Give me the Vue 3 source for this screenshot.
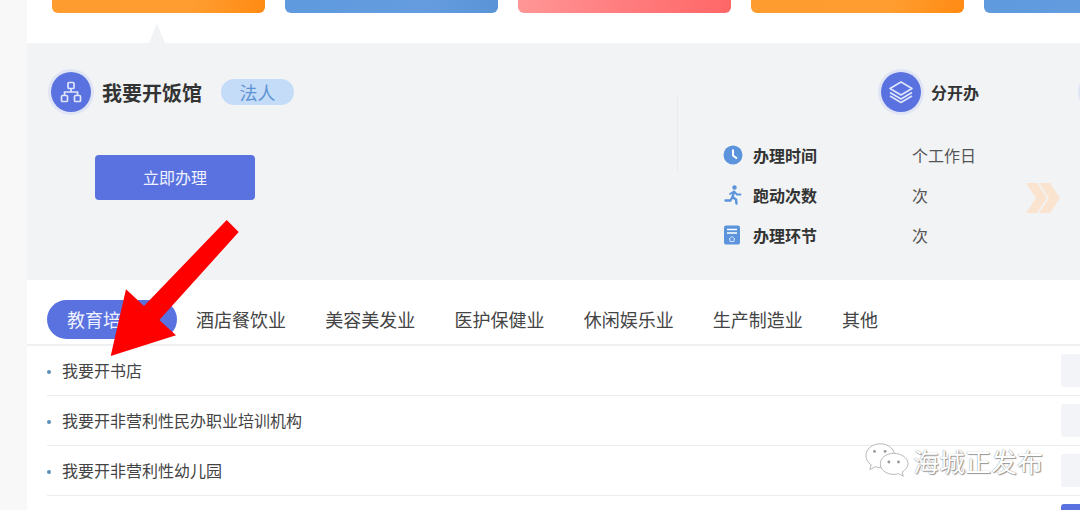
<script setup>
const cards = ['orange', 'blue', 'red', 'orange', 'blue']
const tabs = ['教育培训业', '酒店餐饮业', '美容美发业', '医护保健业', '休闲娱乐业', '生产制造业', '其他']
const rows = [
  { label: '我要开书店', color: 'pale' },
  { label: '我要开非营利性民办职业培训机构', color: 'pale' },
  { label: '我要开非营利性幼儿园', color: 'pale' },
  { label: '', color: 'solid' }
]
</script>

<template>
  <div class="page">
    <aside class="rail"></aside>
    <main class="main">
      <div class="cards">
        <div v-for="(c, i) in cards" :key="i" class="card" :class="c"></div>
      </div>

      <section class="panel">
        <div class="left">
          <div class="head">
            <span class="disc">
              <svg width="24" height="24" viewBox="0 0 24 24" fill="none" stroke="#dfe5fa" stroke-width="1.7">
                <rect x="9" y="2.5" width="6" height="6" rx="1" />
                <rect x="2.5" y="15.5" width="6" height="6" rx="1" />
                <rect x="15.5" y="15.5" width="6" height="6" rx="1" />
                <path d="M12 8.5V12M5.5 15.5V12H18.5V15.5" />
              </svg>
            </span>
            <h2 class="title">我要开饭馆</h2>
            <span class="badge">法人</span>
          </div>
          <button class="action">立即办理</button>
        </div>

        <div class="right">
          <div class="head right-head">
            <span class="disc">
              <svg width="26" height="26" viewBox="0 0 26 26" fill="none" stroke="#dfe5fa" stroke-width="1.6" stroke-linejoin="round">
                <path d="M13 3L24 9.5L13 16L2 9.5Z" />
                <path d="M2 13.5L13 20L24 13.5" />
                <path d="M2 17L13 23.5L24 17" />
              </svg>
            </span>
            <strong class="sub">分开办</strong>
            <span class="disc next"></span>
          </div>

          <ul class="facts">
            <li class="fact">
              <svg class="ficon" width="20" height="20" viewBox="0 0 20 20">
                <circle cx="10" cy="10" r="9.5" fill="#5b94dc" />
                <path d="M10 4.5V10.5L14 13.5" fill="none" stroke="#fff" stroke-width="2" />
              </svg>
              <b>办理时间</b><span>个工作日</span>
            </li>
            <li class="fact">
              <svg class="ficon" width="20" height="20" viewBox="0 0 20 20" fill="none" stroke="#5b94dc" stroke-width="2.4" stroke-linecap="round" stroke-linejoin="round">
                <circle cx="11.5" cy="2.5" r="2.2" fill="#5b94dc" stroke="none" />
                <path d="M11 7L9.5 12L13 14.5L13.5 18.5" />
                <path d="M9.5 12L7.5 15.5L2.5 15.5" />
                <path d="M7 9L11 6.5L14 9.5L17.5 9.5" stroke-width="1.8" />
              </svg>
              <b>跑动次数</b><span>次</span>
            </li>
            <li class="fact">
              <svg class="ficon" width="20" height="20" viewBox="0 0 20 20">
                <rect x="1" y="0.5" width="16" height="19" rx="2" fill="#5b94dc" />
                <path d="M4 4.5H14M4 8H14" stroke="#fff" stroke-width="1.4" />
                <path d="M9 11.5L12 14.2H11V16.5H7V14.2H6Z" fill="none" stroke="#dcebfa" stroke-width="0.9" />
              </svg>
              <b>办理环节</b><span>次</span>
            </li>
          </ul>
        </div>

        <svg class="chevrons" width="34" height="30" viewBox="0 0 34 30" fill="#fbe4cf">
          <polygon points="0,0 11,0 21,15 11,30 0,30 10,15" />
          <polygon points="13,0 24,0 34,15 24,30 13,30 23,15" />
        </svg>
      </section>

      <nav class="tabs">
        <span v-for="(t, i) in tabs" :key="t" class="tab" :class="{ active: i === 0 }">{{ t }}</span>
      </nav>

      <ul class="list">
        <li v-for="(r, i) in rows" :key="i" class="row">
          <i v-if="r.label" class="dot"></i>
          <span class="row-label">{{ r.label }}</span>
          <span class="row-box" :class="r.color"></span>
        </li>
      </ul>
    </main>

    <svg class="arrow" width="1080" height="510" viewBox="0 0 1080 510">
      <polygon points="226.7,220 238.7,232 159.3,320 176,335.3 110.7,356 126,289.3 144,306" fill="#fe0000" />
    </svg>

    <div class="mark">
      <svg width="44" height="38" viewBox="0 0 46 38">
        <path d="M16 1C7.5 1 1 6.5 1 13.5C1 17.5 3.2 20.8 6.5 23L5 28L11 25C13 25.8 15 26 17 26C27 26 31 19 31 13.5C31 6.5 24.5 1 16 1Z" fill="#fff" stroke="#b5b5b5" stroke-width="1" />
        <path d="M30 11C22 11 16 16 16 22C16 28 22 33 30 33C32 33 33.5 32.7 35 32.2L40 35L38.8 30.5C42.5 28.3 45 25.3 45 22C45 16 38 11 30 11Z" fill="#fff" stroke="#b5b5b5" stroke-width="1" />
        <circle cx="10" cy="9" r="1.5" fill="#999" />
        <circle cx="21" cy="9" r="1.5" fill="#999" />
        <circle cx="25" cy="20" r="1.5" fill="#999" />
        <circle cx="35" cy="20" r="1.5" fill="#999" />
      </svg>
      <span class="mark-text">海城正发布</span>
    </div>
  </div>
</template>

<style scoped>
.page {
  position: relative;
  display: flex;
  width: 1080px;
  height: 510px;
  overflow: hidden;
  background: #fff;
  font-family: "Noto Sans CJK SC", "Noto Sans", sans-serif;
  color: #333;
}
.rail {
  flex: 0 0 27px;
  background: #f8f8f9;
}
.main {
  flex: 1;
  min-width: 0;
  display: flex;
  flex-direction: column;
  overflow: hidden;
}
.cards {
  flex: 0 0 43px;
  display: flex;
  gap: 20px;
  padding-left: 25px;
}
.card {
  flex: 0 0 213px;
  height: 13px;
  border-radius: 0 0 6px 6px;
}
.orange { background: linear-gradient(115deg, #ff9c2f 0%, #ff9d30 65%, #ff8a12 100%); }
.blue { background: linear-gradient(115deg, #5f9ade 0%, #649cdf 65%, #5a94d6 100%); }
.red { background: linear-gradient(115deg, #ff9797 0%, #ff7c7e 50%, #ff6666 100%); }

.panel {
  position: relative;
  flex: 0 0 237px;
  display: flex;
  background: #f2f3f5;
}
.panel::before {
  content: "";
  position: absolute;
  left: 122px;
  top: -20px;
  border-left: 8px solid transparent;
  border-right: 8px solid transparent;
  border-bottom: 20px solid #f2f3f5;
}
.left {
  flex: 0 0 650px;
  padding: 29px 0 0 24px;
  box-sizing: border-box;
}
.head {
  display: flex;
  align-items: center;
  gap: 11px;
  height: 40px;
}
.disc {
  flex: 0 0 40px;
  height: 40px;
  display: flex;
  align-items: center;
  justify-content: center;
  border-radius: 50%;
  background: #5a72e0;
  box-shadow: 0 0 0 3px #dfe5f5;
}
.title {
  margin: 2px 0 0;
  font-size: 20px;
  line-height: 28px;
  font-weight: 700;
  color: #333;
}
.badge {
  margin-left: 8px;
  width: 73px;
  height: 26px;
  border-radius: 13px;
  background: #c5dcf9;
  color: #5d93d3;
  font-size: 18px;
  line-height: 26px;
  text-align: center;
}
.action {
  display: block;
  margin: 43px 0 0 44px;
  width: 160px;
  height: 45px;
  padding: 0 0 2px;
  border: 0;
  border-radius: 4px;
  background: #5a72e0;
  color: #f0f3ff;
  font: inherit;
  font-size: 16px;
}
.right {
  position: relative;
  flex: 1;
  min-width: 0;
  padding: 29px 0 0 204px;
}
.right::before {
  content: "";
  position: absolute;
  left: 0;
  top: 52px;
  width: 1px;
  height: 76px;
  background: #e9eaed;
}
.right-head {
  gap: 10px;
}
.sub {
  flex: none;
  font-size: 16px;
  font-weight: 700;
  white-space: nowrap;
}
.next {
  margin-left: 92px;
}
.facts {
  list-style: none;
  margin: 23px 0 0 -158px;
  padding: 0;
}
.fact {
  display: flex;
  align-items: center;
  height: 40px;
  font-size: 16px;
}
.ficon {
  flex: 0 0 20px;
  margin-right: 10px;
}
.fact b {
  flex: 0 0 159px;
  font-weight: 700;
}
.fact span {
  color: #555;
}
.chevrons {
  position: absolute;
  left: 999px;
  top: 140px;
}
.tabs {
  flex: 0 0 66px;
  box-sizing: border-box;
  display: flex;
  align-items: flex-start;
  padding: 20px 0 0 20px;
  border-bottom: 2px solid #eff0f1;
}
.tab {
  padding: 0 19.6px;
  height: 39px;
  line-height: 39px;
  border-radius: 20px;
  font-size: 18px;
  color: #444;
  white-space: nowrap;
}
.tab.active {
  padding: 0 19.5px 0 20px;
  background: #5a72e0;
  color: #eef1ff;
}
.list {
  list-style: none;
  margin: 0 0 0 20px;
  padding: 0;
}
.row {
  display: flex;
  align-items: center;
  height: 50px;
  box-sizing: border-box;
  border-bottom: 1px solid #ececec;
}
.dot {
  flex: 0 0 4px;
  height: 4px;
  margin: 2px 11px 0 0;
  border-radius: 50%;
  background: #5b8fb8;
}
.row-label {
  flex: 1;
  padding-bottom: 2px;
  font-size: 16px;
  color: #444;
}
.row-box {
  flex: 0 0 40px;
  margin-left: auto;
  margin-right: -21px;
  height: 33px;
  border-radius: 3px;
}
.row-box.pale { background: #f3f4f8; }
.row-box.solid { background: #5a72e0; }
.arrow {
  position: absolute;
  left: 0;
  top: 0;
  pointer-events: none;
}
.mark {
  position: absolute;
  left: 865px;
  top: 442px;
  display: flex;
  align-items: center;
  gap: 4px;
}
.mark-text {
  font-size: 26px;
  line-height: 38px;
  color: #fff;
  text-shadow: 0 0 1px #777, 1px 1px 1px #999;
  white-space: nowrap;
}
</style>
